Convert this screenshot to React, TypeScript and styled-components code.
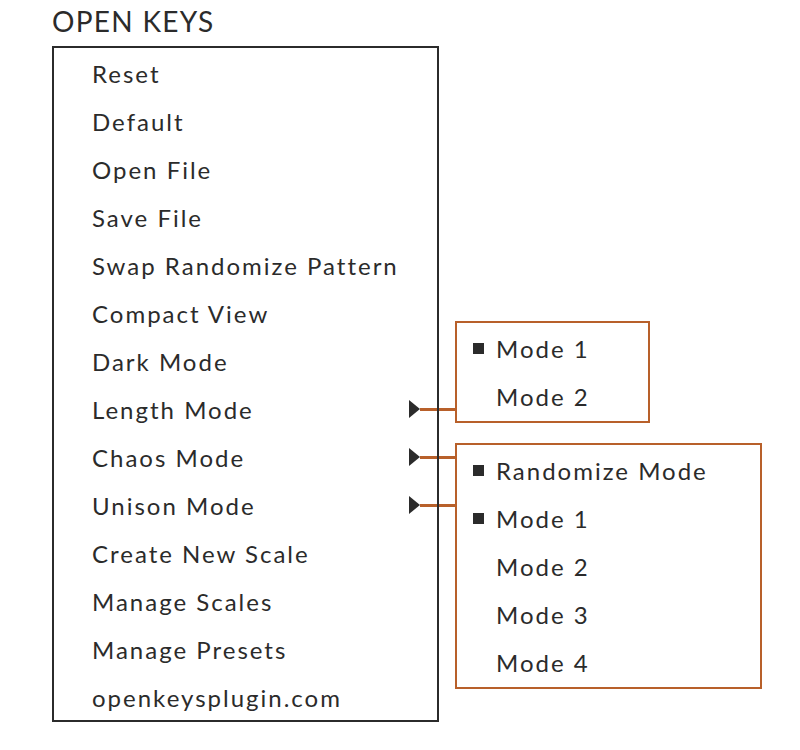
import React from "react";
import styled, { createGlobalStyle } from "styled-components";

const Global = createGlobalStyle`
  html { background: #ffffff; }
  html, body { margin: 0; padding: 0; }
  body { font-family: Lato, "Noto Sans", sans-serif; color: #2b2b2b; }
`;

const ORANGE = "#b8602a";
const INK = "#2b2b2b";

const Page = styled.div`
  position: relative;
  z-index: 0;
  width: 800px;
  height: 750px;
  box-sizing: border-box;
  padding: 7px 0 0 52px;
`;

const Title = styled.h1`
  margin: 0 0 11px;
  font-size: 28px;
  line-height: 28px;
  font-weight: 400;
  letter-spacing: 1.3px;
  white-space: nowrap;
`;

const MainMenu = styled.ul`
  list-style: none;
  margin: 0;
  padding: 0;
  width: 387px;
  box-sizing: border-box;
  border: 2px solid ${INK};
`;

const Item = styled.li`
  position: relative;
  display: flex;
  align-items: center;
  justify-content: space-between;
  height: 48px;
  padding: 0 17px 0 38px;
`;

const Label = styled.span<{ $shift: number }>`
  font-size: 24px;
  line-height: 24px;
  letter-spacing: 2px;
  padding-top: ${(p) => p.$shift}px;
  white-space: nowrap;
`;

const ArrowSvg = styled.svg`
  display: block;
  width: 11px;
  height: 18px;
  margin-top: 2px;
  fill: ${INK};
`;

const Connector = styled.span`
  position: absolute;
  left: 366px;
  top: 24px;
  width: 36px;
  height: 3px;
  background: ${ORANGE};
  z-index: -1;
`;

const SubMenu = styled.ul<{ $top: number; $width: number }>`
  position: absolute;
  left: 455px;
  top: ${(p) => p.$top}px;
  width: ${(p) => p.$width}px;
  box-sizing: border-box;
  list-style: none;
  margin: 0;
  padding: 0 0 2px;
  border: 2px solid ${ORANGE};
  background: #ffffff;
`;

const SubItem = styled.li`
  display: flex;
  align-items: center;
  height: 48px;
  padding-left: 16px;
  gap: 12px;
`;

const Bullet = styled.span<{ $on: boolean }>`
  width: 11px;
  height: 11px;
  margin-top: 2px;
  background: ${INK};
  visibility: ${(p) => (p.$on ? "visible" : "hidden")};
  flex: none;
`;

const Arrow = () => (
  <ArrowSvg viewBox="0 0 11 18">
    <polygon points="0,0 11,9 0,18" />
  </ArrowSvg>
);

const items: { label: string; sub?: boolean }[] = [
  { label: "Reset" },
  { label: "Default" },
  { label: "Open File" },
  { label: "Save File" },
  { label: "Swap Randomize Pattern" },
  { label: "Compact View" },
  { label: "Dark Mode" },
  { label: "Length Mode", sub: true },
  { label: "Chaos Mode", sub: true },
  { label: "Unison Mode", sub: true },
  { label: "Create New Scale" },
  { label: "Manage Scales" },
  { label: "Manage Presets" },
  { label: "openkeysplugin.com" },
];

const lengthModes = [
  { label: "Mode 1", on: true },
  { label: "Mode 2", on: false },
];

const chaosModes = [
  { label: "Randomize Mode", on: true },
  { label: "Mode 1", on: true },
  { label: "Mode 2", on: false },
  { label: "Mode 3", on: false },
  { label: "Mode 4", on: false },
];

export default function App() {
  return (
    <>
      <Global />
      <Page>
        <Title>OPEN KEYS</Title>
        <MainMenu>
          {items.map((it) => (
            <Item key={it.label}>
              <Label $shift={4}>{it.label}</Label>
              {it.sub && (
                <>
                  <Arrow />
                  <Connector />
                </>
              )}
            </Item>
          ))}
        </MainMenu>
        <SubMenu $top={321} $width={195}>
          {lengthModes.map((m) => (
            <SubItem key={m.label}>
              <Bullet $on={m.on} />
              <Label $shift={3}>{m.label}</Label>
            </SubItem>
          ))}
        </SubMenu>
        <SubMenu $top={443} $width={307}>
          {chaosModes.map((m) => (
            <SubItem key={m.label}>
              <Bullet $on={m.on} />
              <Label $shift={3}>{m.label}</Label>
            </SubItem>
          ))}
        </SubMenu>
      </Page>
    </>
  );
}
